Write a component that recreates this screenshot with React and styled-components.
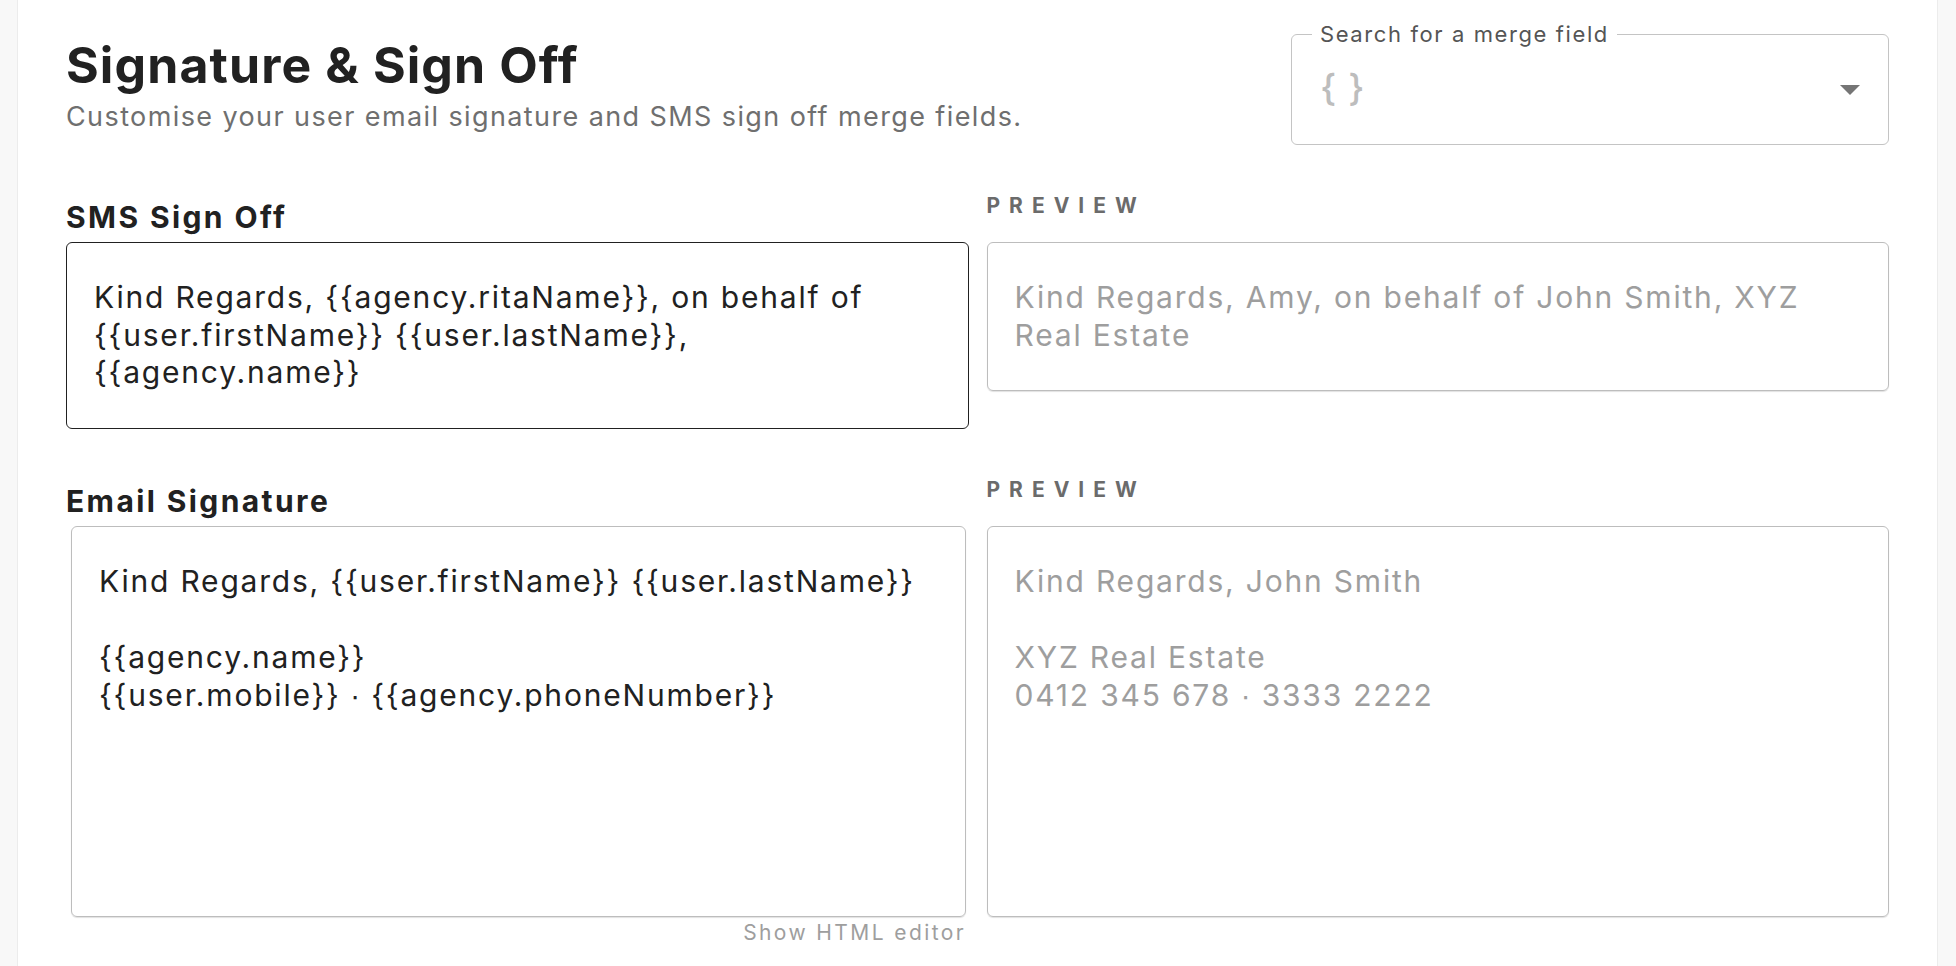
import React from "react"
import styled, { createGlobalStyle } from "styled-components"

const GlobalStyle = createGlobalStyle`
  * {
    box-sizing: border-box;
  }

  body {
    margin: 0;
    background: #f8f8f8;
    font-family: Inter, "Noto Sans", sans-serif;
    color: #212121;
  }
`

const Page = styled.div`
  min-height: 100vh;
  padding-left: 17px;
  width: 1938px;
`

const Card = styled.main`
  min-height: 100vh;
  background: #ffffff;
  border-left: 1px solid #ececec;
  border-right: 1px solid #ececec;
  padding: 35px 48px 0 48px;
`

const Header = styled.header`
  display: flex;
  justify-content: space-between;
  align-items: flex-start;
  height: 108px;
`

const TitleBlock = styled.div`
  display: flex;
  flex-direction: column;
  gap: 7px;
`

const Title = styled.h1`
  margin: 0;
  font-size: 50px;
  line-height: 60px;
  font-weight: 700;
  letter-spacing: 1.1px;
  color: #212121;
`

const Subtitle = styled.p`
  margin: 0;
  font-size: 27px;
  line-height: 30px;
  letter-spacing: 1.4px;
  color: #6f6f6f;
`

const MergeField = styled.fieldset`
  width: 598px;
  margin: -14px 0 0 0;
  padding: 0 28px;
  border: 1.5px solid #c4c4c4;
  border-radius: 6px;
`

const MergeLegend = styled.legend`
  margin-left: -8px;
  padding: 0 8px;
  font-size: 22px;
  line-height: 26px;
  letter-spacing: 1.6px;
  color: #555555;
`

const MergeInput = styled.div`
  display: flex;
  align-items: center;
  justify-content: space-between;
  height: 97px;
  padding-bottom: 16px;
`

const Braces = styled.span`
  font-size: 37px;
  font-weight: 500;
  color: #bdbdbd;
  letter-spacing: 1px;
`

const Caret = styled.span`
  width: 0;
  height: 0;
  border-left: 10px solid transparent;
  border-right: 10px solid transparent;
  border-top: 10px solid #757575;
  margin-top: 4px;
`

const FieldGrid = styled.section`
  display: grid;
  grid-template-columns: 1fr 1fr;
  column-gap: 18px;
  align-items: end;
  margin-top: ${(p) => p.$gap}px;
`

const FieldLabel = styled.h2`
  margin: 0 0 8px 0;
  font-size: 30px;
  line-height: 34px;
  font-weight: 700;
  letter-spacing: 2.4px;
  color: #212121;
`

const PreviewLabel = styled.h3`
  margin: 0 0 24px 0;
  font-size: 21px;
  line-height: 24px;
  font-weight: 700;
  letter-spacing: 9px;
  color: #6b6b6b;
`

const TextBox = styled.div`
  align-self: start;
  height: ${(p) => (p.$height ? `${p.$height}px` : "auto")};
  margin: ${(p) => (p.$inset ? "0 3px 0 5px" : "0")};
  padding: ${(p) => p.$padTop || 36}px 27px 36px 27px;
  border: 1.5px solid ${(p) => (p.$active ? "#212121" : "#bdbdbd")};
  border-radius: 6px;
  box-shadow: ${(p) => (p.$active ? "none" : "0 1px 1px rgba(0, 0, 0, 0.12)")};
  font-size: 30px;
  line-height: ${(p) => p.$lineHeight || 37.5}px;
  letter-spacing: 1.8px;
  color: ${(p) => (p.$muted ? "#9e9e9e" : "#212121")};
  white-space: pre-line;
`

const HtmlToggle = styled.div`
  width: 900px;
  margin-top: 4px;
  text-align: right;
  font-size: 21px;
  line-height: 24px;
  letter-spacing: 2.4px;
  color: #9e9e9e;
  cursor: pointer;
`

const smsText =
  "Kind Regards, {{agency.ritaName}}, on behalf of\n{{user.firstName}} {{user.lastName}},\n{{agency.name}}"
const smsPreview = "Kind Regards, Amy, on behalf of John Smith, XYZ\nReal Estate"
const emailText =
  "Kind Regards, {{user.firstName}} {{user.lastName}}\n\u00a0\n{{agency.name}}\n{{user.mobile}} \u2219 {{agency.phoneNumber}}"
const emailPreview = "Kind Regards, John Smith\n\u00a0\nXYZ Real Estate\n0412 345 678 \u2219 3333 2222"

const App = () => {
  return (
    <Page>
      <GlobalStyle />
      <Card>
        <Header>
          <TitleBlock>
            <Title>Signature &amp; Sign Off</Title>
            <Subtitle>Customise your user email signature and SMS sign off merge fields.</Subtitle>
          </TitleBlock>
          <MergeField>
            <MergeLegend>Search for a merge field</MergeLegend>
            <MergeInput>
              <Braces>{"{ }"}</Braces>
              <Caret />
            </MergeInput>
          </MergeField>
        </Header>

        <FieldGrid $gap={51}>
          <FieldLabel>SMS Sign Off</FieldLabel>
          <PreviewLabel>PREVIEW</PreviewLabel>
          <TextBox $active>{smsText}</TextBox>
          <TextBox $muted>{smsPreview}</TextBox>
        </FieldGrid>

        <FieldGrid $gap={49}>
          <FieldLabel>Email Signature</FieldLabel>
          <PreviewLabel>PREVIEW</PreviewLabel>
          <TextBox $inset $height={391} $lineHeight={38} $padTop={35}>
            {emailText}
          </TextBox>
          <TextBox $muted $height={391} $lineHeight={38} $padTop={35}>
            {emailPreview}
          </TextBox>
        </FieldGrid>

        <HtmlToggle>Show HTML editor</HtmlToggle>
      </Card>
    </Page>
  )
}

export default App
